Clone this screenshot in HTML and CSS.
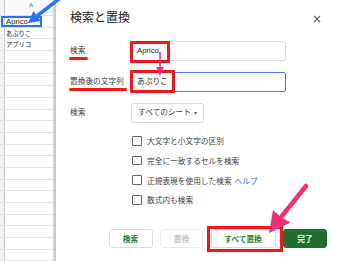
FILE: index.html
```html
<!DOCTYPE html>
<html lang="ja">
<head>
  <meta charset="UTF-8">
  <meta name="viewport" content="width=device-width, initial-scale=1.0">
  <title>検索と置換</title>
  <link rel="stylesheet" href="styles.css">
</head>
<body>

  <div class="page">
    <!-- spreadsheet behind the dialog -->
    <div class="sheet">
      <div class="sheet-head"><span class="rh"></span><span class="col">A</span></div>
      <div class="row"><span class="rh"></span><span class="cell">Aprico</span></div>
      <div class="row"><span class="rh"></span><span class="cell kana">あぷりこ</span></div>
      <div class="row"><span class="rh"></span><span class="cell kana">アプリコ</span></div>
      <div class="row"><span class="rh"></span><span class="cell"></span></div>
      <div class="row"><span class="rh"></span><span class="cell"></span></div>
      <div class="row"><span class="rh"></span><span class="cell"></span></div>
      <div class="row"><span class="rh"></span><span class="cell"></span></div>
      <div class="row"><span class="rh"></span><span class="cell"></span></div>
      <div class="row"><span class="rh"></span><span class="cell"></span></div>
      <div class="row"><span class="rh"></span><span class="cell"></span></div>
      <div class="row"><span class="rh"></span><span class="cell"></span></div>
      <div class="row"><span class="rh"></span><span class="cell"></span></div>
      <div class="row"><span class="rh"></span><span class="cell"></span></div>
      <div class="row"><span class="rh"></span><span class="cell"></span></div>
      <div class="row"><span class="rh"></span><span class="cell"></span></div>
      <div class="row"><span class="rh"></span><span class="cell"></span></div>
      <div class="row"><span class="rh"></span><span class="cell"></span></div>
      <div class="row"><span class="rh"></span><span class="cell"></span></div>
      <div class="row"><span class="rh"></span><span class="cell"></span></div>
      <div class="row"><span class="rh"></span><span class="cell"></span></div>
      <div class="row"><span class="rh"></span><span class="cell"></span></div>
    </div>

    <!-- find & replace dialog -->
    <div class="dialog">
      <div class="dialog-head">
        <h1>検索と置換</h1>
        <svg class="close" width="8" height="8" viewBox="0 0 8 8">
          <path d="M1 1 L7 7 M7 1 L1 7" stroke="#5f6368" stroke-width="1.1" fill="none"/>
        </svg>
      </div>

      <div class="form">
        <span class="label marked">検索</span>
        <div class="field">Aprico<i class="box box-find"></i></div>

        <span class="label marked">置換後の文字列</span>
        <div class="field focused">あぷりこ<i class="box box-replace"></i></div>

        <span class="label">検索</span>
        <div class="select">すべてのシート <span class="caret">▾</span></div>
      </div>

      <ul class="options">
        <li><span class="check"></span>大文字と小文字の区別</li>
        <li><span class="check"></span>完全に一致するセルを検索</li>
        <li><span class="check"></span>正規表現を使用した検索 <a class="help">ヘルプ</a></li>
        <li><span class="check"></span>数式内も検索</li>
      </ul>

      <div class="actions">
        <button class="btn">検索</button>
        <button class="btn" disabled>置換</button>
        <button class="btn boxed">すべて置換</button>
        <button class="btn primary">完了</button>
      </div>
    </div>
  </div>

  <div class="sel-box"></div>

  <svg class="arrows" width="340" height="261" viewBox="0 0 340 261">
    <line x1="64" y1="-5" x2="37" y2="16" stroke="#2a73f0" stroke-width="3.5"/>
    <polygon points="28,23 41,21 33.5,11" fill="#2a73f0"/>

    <line x1="160" y1="52" x2="160" y2="69" stroke="#f0327a" stroke-width="1.6"/>
    <polygon points="160,76 156.3,67 163.7,67" fill="#f0327a"/>

    <line x1="306" y1="186" x2="282" y2="216" stroke="#f0327a" stroke-width="4.5" stroke-linecap="round"/>
    <polygon points="269,233 273,210 281.5,217.5 290.5,222.5" fill="#f0327a"/>
  </svg>

</body>
</html>
```

FILE: styles.css
```css
* {
  margin: 0;
  padding: 0;
  box-sizing: border-box;
}

body {
  width: 340px;
  height: 261px;
  overflow: hidden;
  position: relative;
  font-family: 'Liberation Sans', 'Noto Sans CJK JP', sans-serif;
  color: #202124;
  background-color: #fff;
}

.page {
  display: flex;
  height: 261px;
}

/* sheet */

.sheet {
  width: 56px;
  flex-shrink: 0;
  border-right: 3px solid #dcdcdc;
  background-color: #fff;
}

.sheet-head,
.row {
  display: flex;
  border-bottom: 1px solid #e3e3e3;
}

.sheet-head {
  height: 16px;
  background-color: #f8f9fa;
}

.row {
  height: 11.7px;
}

.rh {
  width: 5px;
  background-color: #f1f3f4;
  border-right: 1px solid #c8c8c8;
}

.col {
  flex: 1;
  text-align: center;
  font-size: 6px;
  color: #666;
  line-height: 10px;
  padding-left: 4px;
}

.cell {
  flex: 1;
  font-size: 7.7px;
  line-height: 11px;
  padding-left: 1px;
  white-space: nowrap;
  color: #222;
}

.cell.kana {
  font-size: 6.3px;
}

.sel-box {
  position: absolute;
  left: 1px;
  top: 16px;
  width: 41px;
  height: 10.5px;
  border: 2px solid #2a73f0;
}

/* dialog */

.dialog {
  flex: 1;
  background-color: #fff;
  box-shadow: -1px 0 3px rgba(0, 0, 0, 0.15);
  padding: 10.5px 13px 0 14px;
}

.dialog-head {
  display: flex;
  justify-content: space-between;
  align-items: center;
  height: 14px;
}

.dialog-head h1 {
  font-size: 12px;
  font-weight: normal;
  line-height: 14px;
  color: #202124;
}

.close {
  margin-right: 6px;
  margin-top: 3px;
}

.form {
  display: grid;
  grid-template-columns: 60px 156px;
  grid-auto-rows: 20px;
  row-gap: 11px;
  align-items: center;
  margin-top: 16.5px;
}

.label {
  position: relative;
  font-size: 7.7px;
  line-height: 10px;
  color: #3c4043;
  justify-self: start;
}

.marked::after {
  content: '';
  position: absolute;
  left: -1px;
  right: -3px;
  bottom: -4px;
  height: 3px;
  border-radius: 2px;
  background-color: #f01818;
}

.field {
  position: relative;
  height: 20px;
  border: 1px solid #dadce0;
  border-radius: 2px;
  font-size: 7.7px;
  line-height: 18px;
  padding-left: 6px;
  color: #202124;
}

.field.focused {
  border: 1.5px solid #4d7cf0;
  line-height: 17px;
}

.box {
  position: absolute;
  border: 3px solid #f01818;
  border-radius: 1px;
}

.box-find {
  left: -1px;
  top: -1px;
  width: 40px;
  height: 22px;
}

.box-replace {
  left: -1.5px;
  top: -3px;
  width: 45px;
  height: 23px;
}

.select {
  justify-self: start;
  width: 73px;
  height: 20px;
  margin-left: 1px;
  border: 1px solid #dadce0;
  border-radius: 3px;
  font-size: 7.7px;
  line-height: 18px;
  padding-left: 6px;
  color: #3c4043;
}

.caret {
  font-size: 6px;
  margin-left: 1px;
  color: #5f6368;
}

.options {
  list-style: none;
  margin: 8px 0 0 62px;
}

.options li {
  display: flex;
  align-items: center;
  height: 19.7px;
  font-size: 7.7px;
  color: #3c4043;
}

.check {
  width: 9.5px;
  height: 9.5px;
  border: 1.3px solid #5f6368;
  border-radius: 1px;
  margin-right: 5.5px;
}

.help {
  color: #1a73e8;
  margin-left: 3px;
}

.actions {
  display: flex;
  justify-content: flex-end;
  gap: 7.5px;
  margin-top: 19px;
}

.btn {
  position: relative;
  height: 19px;
  min-width: 44px;
  padding: 0 8px;
  font-family: 'Liberation Sans', 'Noto Sans CJK JP', sans-serif;
  font-size: 7.7px;
  font-weight: bold;
  color: #188038;
  background-color: #fff;
  border: 1px solid #dadce0;
  border-radius: 3px;
}

.btn:disabled {
  color: #c4c7c5;
  border-color: #eceded;
  min-width: 43px;
}

.btn.boxed {
  width: 65px;
}

.btn.boxed::after {
  content: '';
  position: absolute;
  left: -5px;
  right: -8px;
  top: -4px;
  bottom: -5px;
  border: 3px solid #f01818;
}

.btn.primary {
  background-color: #1f6e2b;
  border-color: #1f6e2b;
  color: #fff;
}

.arrows {
  position: absolute;
  left: 0;
  top: 0;
  pointer-events: none;
}
```
